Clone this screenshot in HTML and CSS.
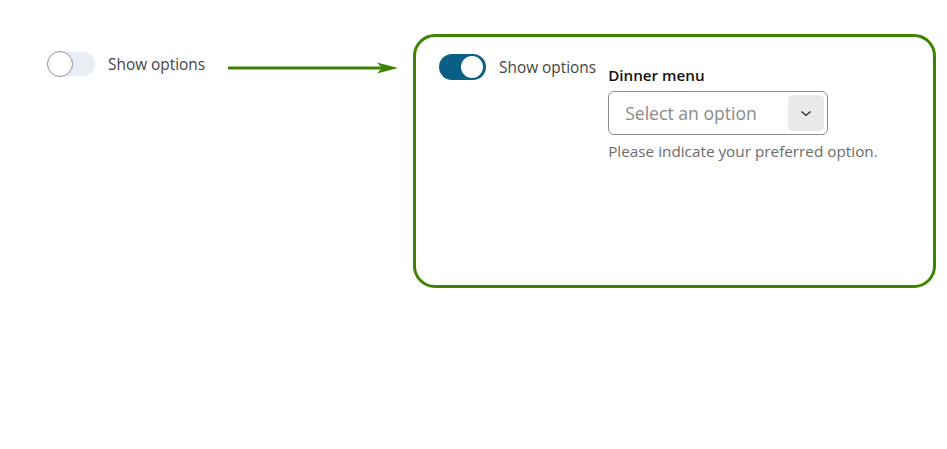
FILE: index.html
```html
<!DOCTYPE html>
<html lang="en">
<head>
  <meta charset="UTF-8"/>
  <title>Switch reveal</title>
  <link rel="stylesheet" href="styles.css">
</head>
<body>
<div class="stage">
  <div class="switch-row before">
    <span class="switch"><span class="thumb"></span></span>
    <span class="switch-label">Show options</span>
  </div>

  <svg class="arrow" width="170" height="12" viewBox="0 0 170 12">
    <line x1="0" y1="6" x2="156" y2="6" stroke="#3f8400" stroke-width="3"/>
    <path d="M149 0.5 L170 6 L149 11.5 L154 6 Z" fill="#3f8400"/>
  </svg>

  <div class="result">
    <div class="switch-row">
      <span class="switch on"><span class="thumb"></span></span>
      <span class="switch-label">Show options</span>
    </div>
    <div class="field">
      <label class="field-label">Dinner menu</label>
      <div class="select">
        <span class="placeholder">Select an option</span>
        <span class="select-btn">
          <svg width="14" height="9" viewBox="0 0 14 9"><path d="M2.5 2.5 L7 6.5 L11.5 2.5" fill="none" stroke="#222" stroke-width="1.3"/></svg>
        </span>
      </div>
      <p class="hint">Please indicate your preferred option.</p>
    </div>
  </div>
</div>
</body>
</html>
```

FILE: styles.css
```css
body {
  font-family: "Open Sans", "Noto Sans", sans-serif;
  margin: 0;
  background-color: #fff;
  color: #333;
}
.stage {
  display: flex;
  align-items: flex-start;
  padding: 34px 0 0 47px;
}
.switch-row {
  display: flex;
  align-items: center;
  gap: 13px;
}
.switch-row.before {
  width: 158px;
  margin-top: 18px;
}
.switch {
  position: relative;
  flex: none;
  display: inline-block;
  width: 48px;
  height: 24px;
  border-radius: 12px;
  background-color: #e8eef4;
}
.switch .thumb {
  position: absolute;
  left: 0;
  top: -1px;
  width: 24px;
  height: 24px;
  border: 1px solid #8a96a0;
  border-radius: 50%;
  background: #fff;
}
.switch.on {
  width: 47px;
  height: 26px;
  border-radius: 13px;
  background-color: #0b5f86;
}
.switch.on .thumb {
  left: auto;
  right: 3px;
  top: 2px;
  width: 22px;
  height: 22px;
  border: none;
}
.switch-label {
  font-size: 15.4px;
  color: #444;
  white-space: nowrap;
}
.arrow {
  flex: none;
  margin: 28px 15px 0 23px;
}
.result {
  display: flex;
  align-items: flex-start;
  gap: 12px;
  width: 471px;
  height: 214px;
  padding: 17px 23px;
  border: 3px solid #3f8400;
  border-radius: 22px;
}
.field {
  display: flex;
  flex-direction: column;
  margin-top: 11px;
}
.field-label {
  font-size: 15.2px;
  font-weight: 600;
  color: #111;
  line-height: 20px;
}
.select {
  display: flex;
  align-items: center;
  justify-content: space-between;
  box-sizing: border-box;
  width: 220px;
  height: 44px;
  margin-top: 6px;
  padding: 0 3px 0 16px;
  border: 1px solid #8c8c8c;
  border-radius: 6px;
}
.placeholder {
  font-size: 17.6px;
  color: #8a8a8a;
}
.select-btn {
  display: flex;
  align-items: center;
  justify-content: center;
  width: 36px;
  height: 36px;
  border-radius: 5px;
  background-color: #e9e9e9;
}
.hint {
  margin: 6px 0 0;
  font-size: 15.3px;
  color: #6b6b6b;
}
```
